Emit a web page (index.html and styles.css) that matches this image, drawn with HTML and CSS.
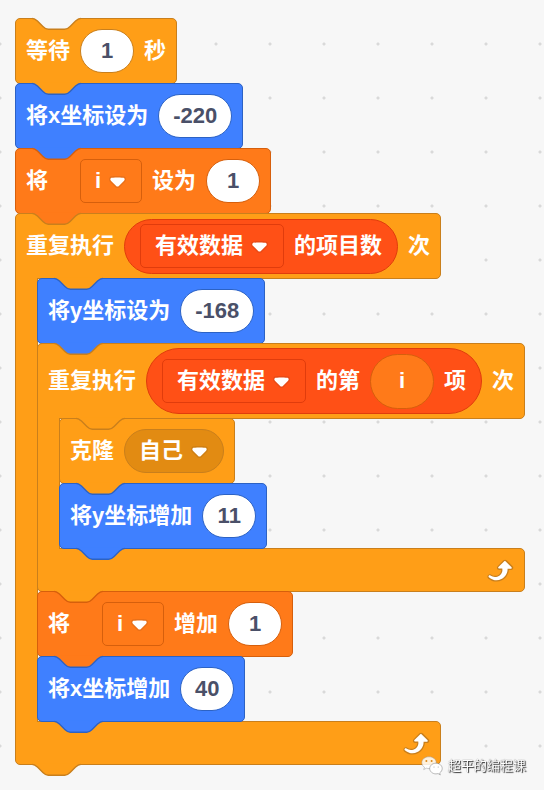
FILE: index.html
```
<!DOCTYPE html>
<html lang="zh-CN">
<head>
  <meta charset="UTF-8" />
  <meta name="viewport" content="width=device-width, initial-scale=1" />
  <title>超平的编程课</title>
  <link rel="stylesheet" href="styles.css">
</head>
<body>
  <!-- Shared shapes -->
  <svg class="defs" aria-hidden="true">
    <symbol id="tab" viewBox="12 -1 36 10" preserveAspectRatio="xMinYMin meet">
      <path class="tab-fill" d="M12,-.5 V0 c2,0 3,1 4,2 l4,4 c1,1 2,2 4,2 h12 c2,0 3,-1 4,-2 l4,-4 c1,-1 2,-2 4,-2 V-.5 Z"/>
      <path class="tab-line" d="M12,0 c2,0 3,1 4,2 l4,4 c1,1 2,2 4,2 h12 c2,0 3,-1 4,-2 l4,-4 c1,-1 2,-2 4,-2"/>
    </symbol>
    <symbol id="arrow" viewBox="0 0 12.71 8.79">
      <path fill="#231f20" opacity=".1" d="M12.71,2.44A2.41,2.41,0,0,1,12,4.16L8.08,8.08a2.45,2.45,0,0,1-3.45,0L.72,4.16A2.42,2.42,0,0,1,0,2.44,2.48,2.48,0,0,1,.71.71C1,.47,1.43,0,6.36,0S11.75,.46,12,.71A2.44,2.44,0,0,1,12.71,2.44Z"/>
      <path fill="#fff" d="M6.36,7.79a1.43,1.43,0,0,1-1-.42L1.42,3.45a1.44,1.44,0,0,1,0-2c.56-.56,9.31-.56,9.87,0a1.44,1.44,0,0,1,0,2L7.37,7.37A1.43,1.43,0,0,1,6.36,7.79Z"/>
    </symbol>
    <symbol id="loop" viewBox="0 0 24 24">
      <path fill="#c97f1c" d="M23.3,11c-.3,.6-.9,1-1.5,1h-1.6c-.1,1.3-.5,2.5-1.1,3.6c-.9,1.7-2.3,3.2-4.1,4.1c-1.7,.9-3.6,1.2-5.5,.9c-1.8-.3-3.5-1.1-4.9-2.3c-.7-.7-.7-1.9,0-2.6c.6-.6,1.6-.7,2.3-.2H7c.9,.6,1.9,.9,2.9,.9s1.9-.3,2.7-.9c1.1-.8,1.8-2.1,1.8-3.5h-1.5c-.9,0-1.7-.7-1.7-1.7c0-.4,.2-.9,.5-1.2l4.4-4.4c.7-.6,1.7-.6,2.4,0L23,9.2C23.5,9.7,23.6,10.4,23.3,11z"/>
      <path fill="#fff" d="M21.8,11h-2.6c0,1.5-.3,2.9-1,4.2c-.8,1.6-2.1,2.8-3.7,3.6c-1.5,.8-3.3,1.1-4.9,.8c-1.6-.2-3.2-1-4.4-2.1c-.4-.3-.4-.9-.1-1.2c.3-.4,.9-.4,1.2-.1l0,0c1,.7,2.2,1.1,3.4,1.1s2.3-.3,3.3-1c.9-.6,1.6-1.5,2-2.6c.3-.9,.4-1.8,.2-2.8h-2.4c-.4,0-.7-.3-.7-.7c0-.2,.1-.3,.2-.4l4.4-4.4c.3-.3,.7-.3,.9,0L22,9.8c.3,.3,.4,.6,.3,.9S22,11,21.8,11z"/>
    </symbol>
  </svg>

  <main class="stack">
    <div class="block control">
      <svg class="tab tab-top on-control"><use href="#tab"/></svg>
      <label for="wait">等待</label>
      <input class="num" id="wait" type="text" value="1">
      <span>秒</span>
      <svg class="tab on-motion"><use href="#tab"/></svg>
    </div>
    <div class="block motion">
      <label for="set-x">将x坐标设为</label>
      <input class="num num-wide" id="set-x" type="text" value="-220">
      <svg class="tab on-data"><use href="#tab"/></svg>
    </div>
    <div class="block data">
      <label class="spaced" for="set-var">将</label>
      <span class="menu">
        <select id="set-var"><option>i</option></select>
        <svg class="arrow"><use href="#arrow"/></svg>
      </span>
      <label for="set-value">设为</label>
      <input class="num" id="set-value" type="text" value="1">
      <svg class="tab on-control"><use href="#tab"/></svg>
    </div>

    <!-- Outer loop -->
    <div class="loop">
      <div class="block control head">
        <span>重复执行</span>
        <div class="reporter list">
          <span class="menu">
            <select aria-label="列表"><option>有效数据</option></select>
            <svg class="arrow"><use href="#arrow"/></svg>
          </span>
          <span>的项目数</span>
        </div>
        <span>次</span>
        <svg class="tab tab-inner on-motion"><use href="#tab"/></svg>
      </div>
      <div class="body">
        <div class="arm"></div>
        <div class="stack inner">
          <div class="block motion">
            <label for="set-y">将y坐标设为</label>
            <input class="num num-wide" id="set-y" type="text" value="-168">
            <svg class="tab on-control"><use href="#tab"/></svg>
          </div>

          <!-- Inner loop -->
          <div class="loop">
            <div class="block control head head-tall">
              <span>重复执行</span>
              <div class="reporter list reporter-tall">
                <span class="menu">
                  <select aria-label="列表"><option>有效数据</option></select>
                  <svg class="arrow"><use href="#arrow"/></svg>
                </span>
                <span>的第</span>
                <div class="reporter data variable">i</div>
                <span>项</span>
              </div>
              <span>次</span>
              <svg class="tab tab-inner on-control"><use href="#tab"/></svg>
            </div>
            <div class="body">
              <div class="arm"></div>
              <div class="stack inner">
                <div class="block control">
                  <label for="clone">克隆</label>
                  <span class="menu menu-round">
                    <select id="clone"><option>自己</option></select>
                    <svg class="arrow"><use href="#arrow"/></svg>
                  </span>
                  <svg class="tab on-motion"><use href="#tab"/></svg>
                </div>
                <div class="block motion">
                  <label for="add-y">将y坐标增加</label>
                  <input class="num" id="add-y" type="text" value="11">
                  <svg class="tab on-motion"><use href="#tab"/></svg>
                </div>
              </div>
            </div>
            <div class="block control foot">
              <svg class="loop-icon"><use href="#loop"/></svg>
              <svg class="tab on-data"><use href="#tab"/></svg>
            </div>
          </div>

          <div class="block data">
            <label class="spaced" for="add-var">将</label>
            <span class="menu">
              <select id="add-var"><option>i</option></select>
              <svg class="arrow"><use href="#arrow"/></svg>
            </span>
            <label for="add-value">增加</label>
            <input class="num" id="add-value" type="text" value="1">
            <svg class="tab on-motion"><use href="#tab"/></svg>
          </div>
          <div class="block motion">
            <label for="add-x">将x坐标增加</label>
            <input class="num" id="add-x" type="text" value="40">
            <svg class="tab on-motion"><use href="#tab"/></svg>
          </div>
        </div>
      </div>
      <div class="block control foot">
        <svg class="loop-icon"><use href="#loop"/></svg>
        <svg class="tab on-control"><use href="#tab"/></svg>
      </div>
    </div>
  </main>

  <div class="watermark">
    <svg class="wechat" viewBox="0 0 22 20" aria-hidden="true">
      <path fill="#fff" fill-opacity=".85" stroke="#999" stroke-width=".5" d="M8 .8C3.900 .8 .8 3.400 .8 6.700c0 1.900 1 3.500 2.700 4.600l-.8 2.300 2.700-1.400c.8.200 1.700.4 2.600.4 4 0 7.200-2.600 7.200-5.900S12 .8 8 .8z"/>
      <circle cx="5.400" cy="5" r="1" fill="#d98a1c"/>
      <circle cx="10.600" cy="5" r="1" fill="#d98a1c"/>
      <path fill="#fff" stroke="#777" stroke-width=".5" d="M15 7.200c-3.500 0-6.300 2.400-6.300 5.300s2.800 5.400 6.300 5.400c.7 0 1.400-.1 2.100-.3l2.200 1.300-.6-2c1.500-1 2.500-2.600 2.500-4.400 0-2.900-2.800-5.300-6.200-5.300z"/>
      <circle cx="13" cy="11" r=".5" fill="#999"/>
      <circle cx="17.200" cy="11" r=".5" fill="#999"/>
    </svg>
    <span>超平的编程课</span>
  </div>
</body>
</html>
```
FILE: styles.css
```
:root {
  --canvas: #f7f7f7;
  --control: #ff9e17;
  --control-line: #c97f1c;
  --control-dark: #e28b12;
  --motion: #3f80ff;
  --motion-line: #2c62c4;
  --data: #ff7a19;
  --data-line: #d65f0c;
  --list: #ff5016;
  --list-line: #e03c0c;
}
* {
  box-sizing: border-box;
}
body {
  margin: 0;
  padding: 18px 15px 14px;
  min-height: 100vh;
  background: var(--canvas) radial-gradient(circle, #d9d9d9 1px, transparent 2px) 27px 17px / 54px 54px;
  color: #fff;
  font: bold 22px/32px "Liberation Sans", "Noto Sans CJK SC", sans-serif;
}
input, select {
  font: inherit;
  margin: 0;
}
.defs {
  position: absolute;
  width: 0;
  height: 0;
}

/* Block colours */
.control { --fill: var(--control); --line: var(--control-line); }
.motion { --fill: var(--motion); --line: var(--motion-line); }
.data { --fill: var(--data); --line: var(--data-line); }
.list { --fill: var(--list); --line: var(--list-line); }

/* Neighbouring blocks share one border line */
.stack, .loop {
  display: flex;
  flex-direction: column;
  align-items: flex-start;
}
.block {
  position: relative;
  display: flex;
  align-items: center;
  gap: 10px;
  height: 66px;
  margin-bottom: -1px;
  padding: 0 10px;
  background: var(--fill);
  border: 1px solid var(--line);
  border-radius: 5px;
  white-space: nowrap;
}
.spaced {
  margin-right: 22px;
}

/* Connector bump, outlined in the colour of the block on top of it */
.tab {
  position: absolute;
  left: 16px;
  top: 100%;
  z-index: 2;
  width: 49px;
  height: 14px;
  margin-top: -1px;
  fill: var(--fill);
  pointer-events: none;
}
.tab-fill {
  stroke: none;
}
.tab-line {
  fill: none;
  stroke-width: 1;
}
.tab-top {
  top: -1px;
  fill: var(--canvas);
}
.tab-inner {
  left: 38px;
}
.on-control { stroke: var(--control-line); }
.on-motion { stroke: var(--motion-line); }
.on-data { stroke: var(--data-line); }

/* Inputs */
.num {
  width: 54px;
  height: 44px;
  padding: 0;
  color: #4a5068;
  text-align: center;
  background: #fff;
  border: 1px solid var(--line);
  border-radius: 22px;
}
.num-wide {
  width: 74px;
}
.menu {
  position: relative;
  display: flex;
}
.menu select {
  height: 44px;
  padding: 0 39px 0 14px;
  color: #fff;
  appearance: none;
  background: transparent;
  border: 1px solid var(--line);
  border-radius: 5px;
}
.menu-round select {
  background: var(--control-dark);
  border-radius: 22px;
}
.arrow {
  position: absolute;
  right: 16px;
  top: 17px;
  width: 17px;
  height: 12px;
  pointer-events: none;
}

/* Rounded value blocks */
.reporter {
  display: flex;
  align-items: center;
  justify-content: center;
  gap: 10px;
  height: 55px;
  padding: 0 15px;
  background: var(--fill);
  border: 1px solid var(--line);
  border-radius: 33px;
}
.reporter-tall {
  height: 66px;
}
.variable {
  min-width: 64px;
}

/* Loops */
.loop {
  position: relative;
}
.head {
  border-bottom-left-radius: 0;
}
.head-tall {
  height: 76px;
}
.body {
  display: flex;
  width: 0; /* nested blocks may be wider than the loop itself */
}
.arm {
  position: relative;
  z-index: 1;
  flex: none;
  width: 23px;
  margin-bottom: -1px;
  background: var(--control);
  border: solid var(--control-line);
  border-width: 0 1px;
}
.inner {
  position: relative;
  z-index: 1;
  flex: none;
  margin-left: -1px;
}
.foot {
  align-self: stretch;
  justify-content: flex-end;
  height: 44px;
  border-top-left-radius: 0;
}
.loop-icon {
  width: 32px;
  height: 32px;
}

.watermark {
  position: fixed;
  right: 18px;
  bottom: 12px;
  z-index: 3;
  display: flex;
  align-items: center;
  gap: 5px;
  color: #fff;
  font-size: 13px;
  font-weight: normal;
  line-height: 24px;
  text-shadow: 1px 1px 1px #333, 0 0 1px #444;
}
.wechat {
  width: 22px;
  height: 20px;
}
```
